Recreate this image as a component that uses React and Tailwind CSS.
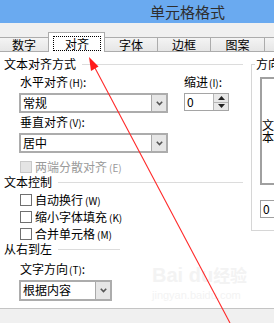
const font = "font-['Noto_Sans_CJK_SC',sans-serif]";

function Chevron() {
  return (
    <svg width="7" height="5" viewBox="0 0 7 5">
      <path d="M0.8 0.8 L3.5 3.6 L6.2 0.8" stroke="#555" strokeWidth="1.6" fill="none" />
    </svg>
  );
}

function Select({ value, className }) {
  return (
    <div className={`flex border-2 border-[#acacac] bg-white ${className}`}>
      <div className="flex-1 pl-[2px] text-[12px] leading-[16px] text-black">{value}</div>
      <div className="w-[15px] flex items-center justify-center bg-[#e6e6e6] border-l border-[#a9a9a9]">
        <Chevron />
      </div>
    </div>
  );
}

function Header({ title, className = "" }) {
  return (
    <div className={`flex items-center h-[12px] ${className}`}>
      <span className="text-[12px] leading-[12px] text-black">{title}</span>
      <div className="flex-1 h-px bg-[#dcdcdc] ml-[6px]" />
    </div>
  );
}

function Check({ label, hint, disabled, className = "" }) {
  return (
    <div className={`flex items-center h-[12px] ml-[16px] ${className}`}>
      <div
        className={
          disabled
            ? "w-[12px] h-[12px] border border-[#c9c9c9] bg-[#e4e4e4]"
            : "w-[12px] h-[12px] border border-[#707070] bg-white"
        }
      />
      <span className={`ml-[3px] text-[12px] leading-[12px] ${disabled ? "text-[#9a9a9a]" : "text-black"}`}>
        {label}
        <span className="ml-[2px] text-[10px]">{hint}</span>
      </span>
    </div>
  );
}

function Tab({ label, className = "" }) {
  return (
    <div
      className={`h-[15px] border-t border-b border-[#acacac] bg-linear-to-b from-[#f4f4f4] to-[#e6e6e6] flex items-center justify-center text-[12px] leading-[12px] text-black ${className}`}
    >
      {label}
    </div>
  );
}

export default function App() {
  return (
    <div className={`relative w-[274px] h-[323px] overflow-hidden bg-white ${font}`}>
      <div className="h-[23px] bg-[#6aaaf0] pl-[150px] pt-[3px] text-[15px] leading-[17px] text-[#2e2e2e]">
        单元格格式
      </div>

      <div className="flex items-end h-[29px] bg-[#f0f0f0]">
        <Tab label="数字" className="w-[48px]" />
        <div className="h-[20px] w-[57px] border-l border-t border-r border-[#acacac] bg-white flex pt-[3px] pl-[4px] pr-[3px] pb-[1px]">
          <div className="flex-1 border border-dotted border-black flex items-center justify-center text-[12px] leading-[12px] text-black">
            对齐
          </div>
        </div>
        <Tab label="字体" className="w-[53px] border-r" />
        <Tab label="边框" className="w-[53px] border-r" />
        <Tab label="图案" className="w-[54px] border-r" />
        <Tab label="" className="flex-1" />
      </div>

      <div className="flex h-[256px]">
        <div className="w-[251px] shrink-0 pl-[4px] pr-[8px] pt-[6px]">
          <Header title="文本对齐方式" />
          <div className="flex mt-[6px]">
            <div className="ml-[15px] w-[149px]">
              <div className="pl-[1px] text-[12px] leading-[12px] text-black">
                水平对齐<span className="text-[10px] ml-[1px]">(H)</span>:
              </div>
              <Select value="常规" className="mt-[4px] h-[20px]" />
              <div className="mt-[3px] pl-[1px] text-[12px] leading-[12px] text-black">
                垂直对齐<span className="text-[10px] ml-[1px]">(V)</span>:
              </div>
              <Select value="居中" className="mt-[4px] h-[20px]" />
            </div>
            <div className="ml-[16px] w-[45px]">
              <div className="text-[12px] leading-[12px] text-black whitespace-nowrap">
                缩进<span className="text-[10px] ml-[1px]">(I)</span>:
              </div>
              <div className="mt-[4px] h-[18px] flex border border-[#a5a5a5] bg-white">
                <div className="flex-1 pl-[2px] text-[12px] leading-[16px] text-black">0</div>
                <div className="w-[15px] flex flex-col bg-[#e8e8e8] border-l border-[#b5b5b5]">
                  <div className="flex-1 flex items-center justify-center border-b border-[#b5b5b5]">
                    <svg width="7" height="4" viewBox="0 0 7 4">
                      <path d="M0 4 L3.5 0 L7 4 Z" fill="#222" />
                    </svg>
                  </div>
                  <div className="flex-1 flex items-center justify-center">
                    <svg width="7" height="4" viewBox="0 0 7 4">
                      <path d="M0 0 L3.5 4 L7 0 Z" fill="#222" />
                    </svg>
                  </div>
                </div>
              </div>
            </div>
          </div>
          <Check label="两端分散对齐" hint="(E)" disabled className="mt-[8px]" />
          <Header title="文本控制" className="mt-[3px]" />
          <Check label="自动换行" hint="(W)" className="mt-[6px]" />
          <Check label="缩小字体填充" hint="(K)" className="mt-[5px]" />
          <Check label="合并单元格" hint="(M)" className="mt-[5px]" />
          <Header title="从右到左" className="mt-[3px] w-[116px]" />
          <div className="mt-[8px] ml-[16px] text-[12px] leading-[12px] text-black">
            文字方向<span className="text-[10px] ml-[1px]">(T)</span>:
          </div>
          <Select value="根据内容" className="mt-[4px] ml-[15px] w-[93px] h-[21px]" />
        </div>

        <div className="flex-1 min-w-0 pt-[12px]">
          <div className="h-[167px] border-l border-t border-b border-[#d6d6d6]">
            <div className="-mt-[7px] ml-[3px] w-fit bg-white px-[1px] text-[12px] leading-[12px] text-black whitespace-nowrap">
              方向
            </div>
            <div className="mt-[7px] ml-[8px] w-[100px] h-[108px] border-2 border-[#a0a0a0] pt-[40px]">
              <div className="w-[12px] break-all text-[12px] leading-[12px] text-black">文本</div>
            </div>
            <div className="mt-[15px] ml-[8px] w-[100px] h-[18px] border border-[#a0a0a0] pl-[2px] text-[12px] leading-[16px] text-black">
              0
            </div>
          </div>
        </div>
      </div>

      <div className="h-[15px] bg-[#f0f0f0] border-t border-[#c4c4c4]" />

      <div className="pointer-events-none absolute left-[152px] top-[264px] text-[#f3f3f3]">
        <div className="text-[20px] leading-[22px] font-bold font-['Liberation_Sans',sans-serif]">
          Bai du<span className="text-[17px] font-['Noto_Sans_CJK_SC',sans-serif]">经验</span>
        </div>
        <div className="mt-[3px] text-[11px] leading-[12px] font-['Liberation_Sans',sans-serif]">
          jingyan.baidu.com
        </div>
      </div>

      <svg className="pointer-events-none absolute left-0 top-0" width="274" height="323" viewBox="0 0 274 323">
        <line x1="95" y1="68" x2="230" y2="323" stroke="#ff2a2a" strokeWidth="1.1" />
        <polygon points="89,57 98.5,66.5 91,71" fill="#ff1a1a" />
      </svg>
    </div>
  );
}
